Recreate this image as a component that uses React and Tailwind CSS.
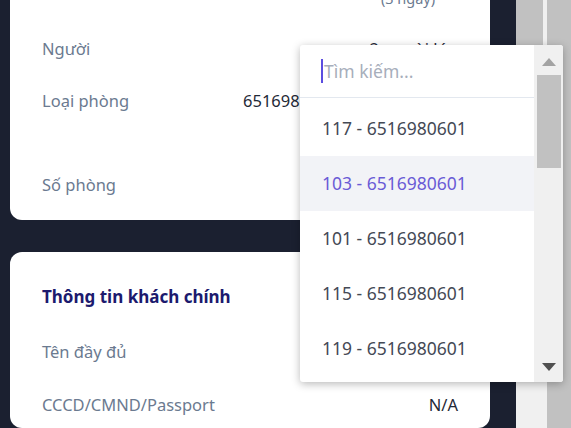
const items = ["117", "103", "101", "115", "119", "121"];

function Row({ label, children, className = "" }) {
  return (
    <div className={"flex justify-between " + className}>
      <span className="text-[#6b7a90] leading-6">{label}</span>
      {children}
    </div>
  );
}

function Dropdown() {
  return (
    <div className="absolute left-[300px] top-[45px] w-[263px] h-[337px] bg-white rounded-[3px] shadow-[0_2px_8px_rgba(0,0,0,0.28)] flex overflow-hidden text-[17.5px]">
      <div className="w-[234px] flex flex-col">
        <div className="h-[53px] border-b border-[#e3e8ef] flex items-center pl-[21px] shrink-0">
          <span className="w-[2px] h-[24px] bg-[#5b4de0]" />
          <span className="text-[#a7aebb] ml-[1px]">Tìm kiếm...</span>
        </div>
        <div className="pt-[3px]">
          {items.map((n, i) => (
            <div
              key={n}
              className={
                "h-[55px] flex items-center pl-[22px] " +
                (i === 1 ? "bg-[#f2f3f7] text-[#6a5bd6]" : "text-[#444955]")
              }
            >
              {n} - 6516980601
            </div>
          ))}
        </div>
      </div>
      <div className="w-[29px] bg-[#f0f0f0] relative">
        <svg className="absolute left-[8px] top-[13px]" width="14" height="8" viewBox="0 0 14 8">
          <path d="M7 0L14 8H0Z" fill="#a3a3a3" />
        </svg>
        <div className="absolute left-[3px] top-[30px] w-[24px] h-[93px] bg-[#c1c1c1]" />
        <svg className="absolute left-[8px] top-[318px]" width="14" height="8" viewBox="0 0 14 8">
          <path d="M0 0H14L7 8Z" fill="#505050" />
        </svg>
      </div>
    </div>
  );
}

export default function App() {
  return (
    <div
      className="relative w-[571px] h-[428px] overflow-hidden bg-[#1b2030] flex text-[16.5px]"
      style={{ fontFamily: '"Noto Sans", "Open Sans", sans-serif' }}
    >
      <div className="w-[516px] pl-[10px] pr-[26px] flex flex-col gap-[32px] shrink-0">
        <div className="-mt-[60px] bg-white rounded-[12px] px-[32px] pt-[24px] pb-[15px] flex flex-col">
          <Row label="Số đêm">
            <div className="w-[100px] text-center">
              <div className="leading-6 text-[#1f2937]">3 đêm</div>
              <div className="text-[14.5px] leading-5 text-[#6b7a90]">(3 ngày)</div>
            </div>
          </Row>
          <Row label="Người" className="mt-[29px]">
            <span className="leading-6 text-[#1f2937]">2 người lớn</span>
          </Row>
          <Row label="Loại phòng" className="mt-[28px]">
            <div className="w-[215px] leading-6 text-[#1f2937]">
              <div className="whitespace-nowrap overflow-hidden">6516980601 - Phòng Deluxe</div>
              <div className="text-right">(2 giường)</div>
            </div>
          </Row>
          <Row label="Số phòng" className="mt-[28px] h-[40px] items-center">
            <div className="w-[150px] h-[40px] border border-[#d1d5db] rounded-md" />
          </Row>
        </div>
        <div className="bg-white rounded-[12px] px-[32px] pt-[31px] flex flex-col h-[300px]">
          <div className="text-[17px] font-bold text-[#1c1a6e] leading-7">Thông tin khách chính</div>
          <Row label="Tên đầy đủ" className="mt-[29px]">
            <span className="leading-6 text-[#1f2937]">Nguyễn Văn A</span>
          </Row>
          <Row label="CCCD/CMND/Passport" className="mt-[29px]">
            <span className="leading-6 text-[#1f2937]">N/A</span>
          </Row>
        </div>
      </div>
      <div className="w-[31px] bg-[#f0f0f0] flex shrink-0">
        <div className="w-[27px] h-[200px] bg-[#c1c1c1]" />
      </div>
      <div className="flex-1 bg-[#c1c1c1]" />
      <Dropdown />
    </div>
  );
}
